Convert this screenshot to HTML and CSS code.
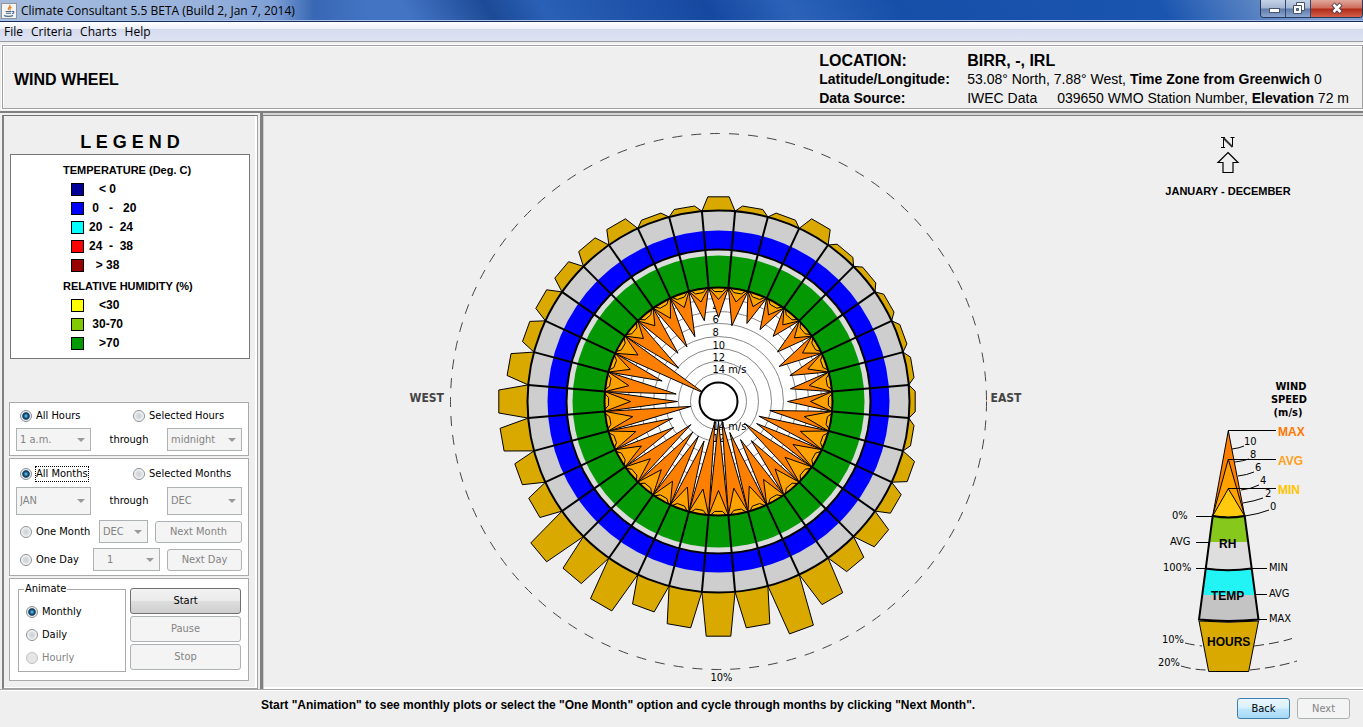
FILE: index.html
```html
<!DOCTYPE html>
<html lang="en">
<head>
<meta charset="utf-8">
<title>Climate Consultant 5.5 BETA</title>
<link rel="stylesheet" href="styles.css">
</head>
<body>
<div class="window">
  <header class="titlebar">
    <svg class="app-icon" viewBox="0 0 16 16" aria-hidden="true">
      <rect x="0.5" y="0.5" width="15" height="15" fill="#f4f4f2" stroke="#8d949c"/>
      <path d="M8.5 2c2 1.600-2.500 2.600-1 5M10.500 4c-2.500 1-1.500 2-1.200 3.300" fill="none" stroke="#e8791c" stroke-width="1.200"/>
      <path d="M4.500 8.500h6M5 10.300h5M3 12.500c2 1.200 7 1.200 9 0M11 8.500c2.500-.5 2.500 1.800 0 2.300" fill="none" stroke="#46698c" stroke-width="1.100"/>
    </svg>
    <span class="title">Climate Consultant 5.5 BETA (Build 2, Jan 7, 2014)</span>
    <div class="window-buttons">
      <button type="button" class="win" aria-label="Minimize"><svg viewBox="0 0 24 17"><rect x="8.500" y="8.500" width="10" height="4" fill="#fff" stroke="#47546b"/></svg></button>
      <button type="button" class="win" aria-label="Restore"><svg viewBox="0 0 24 17"><path d="M10.500 2.500h8v8h-8z" fill="#fff" stroke="#47546b"/><path d="M7.500 5.500h8v8h-8z" fill="#fff" stroke="#47546b"/><path d="M10.500 8.500h2v2h-2z" fill="#6d84ab" stroke="#47546b"/></svg></button>
      <button type="button" class="win win-close" aria-label="Close"><svg viewBox="0 0 24 17"><path d="M8 4l8 8.500M16 4l-8 8.500" stroke="#4b3a45" stroke-width="4.500"/><path d="M8.500 4.500l7 7.500M15.500 4.500l-7 7.500" stroke="#fff" stroke-width="2.600"/></svg></button>
    </div>
  </header>

  <nav class="menubar">
    <button type="button">File</button>
    <button type="button">Criteria</button>
    <button type="button">Charts</button>
    <button type="button">Help</button>
  </nav>

  <section class="heading">
    <h1>WIND WHEEL</h1>
    <dl class="station">
      <dt class="big">LOCATION:</dt><dd class="big">BIRR, -, IRL</dd>
      <dt>Latitude/Longitude:</dt><dd>53.08° North, 7.88° West, <b>Time Zone from Greenwich</b> 0</dd>
      <dt>Data Source:</dt><dd><span class="dataset">IWEC Data</span>039650 WMO Station Number, <b>Elevation</b> 72 m</dd>
    </dl>
  </section>

  <main class="workspace">
    <aside class="sidebar">
      <h2>L E G E N D</h2>
      <section class="legend">
        <h3>TEMPERATURE (Deg. C)</h3>
        <ul>
          <li><i class="swatch t-freezing"></i><span>   &lt; 0</span></li>
          <li><i class="swatch t-cold"></i><span> 0   -   20</span></li>
          <li><i class="swatch t-comfort"></i><span>20  -  24</span></li>
          <li><i class="swatch t-warm"></i><span>24  -  38</span></li>
          <li><i class="swatch t-hot"></i><span>  &gt; 38</span></li>
        </ul>
        <h3 class="second">RELATIVE HUMIDITY (%)</h3>
        <ul>
          <li><i class="swatch h-dry"></i><span>   &lt;30</span></li>
          <li><i class="swatch h-mid"></i><span> 30-70</span></li>
          <li><i class="swatch h-wet"></i><span>   &gt;70</span></li>
        </ul>
      </section>

      <form class="controls">
        <section class="group">
          <div class="row range">
            <label class="radio"><input type="radio" name="hours" checked><span>All Hours</span></label>
            <label class="radio"><input type="radio" name="hours"><span>Selected Hours</span></label>
          </div>
          <div class="row spread short">
            <span class="combo w75"><select disabled aria-label="First hour"><option>1 a.m.</option></select></span>
            <span>through</span>
            <span class="combo w75"><select disabled aria-label="Last hour"><option>midnight</option></select></span>
          </div>
        </section>
        <section class="group months">
          <div class="row range">
            <label class="radio focus"><input type="radio" name="months" checked><span>All Months</span></label>
            <label class="radio"><input type="radio" name="months"><span>Selected Months</span></label>
          </div>
          <div class="row spread tall">
            <span class="combo w75"><select disabled aria-label="First month"><option>JAN</option></select></span>
            <span>through</span>
            <span class="combo w75"><select disabled aria-label="Last month"><option>DEC</option></select></span>
          </div>
          <div class="row short">
            <label class="radio"><input type="radio" name="months"><span>One Month</span></label>
            <span class="combo w49 push"><select disabled aria-label="Month"><option>DEC</option></select></span>
            <button type="button" class="btn w87" disabled>Next Month</button>
          </div>
          <div class="row short">
            <label class="radio"><input type="radio" name="months"><span>One Day</span></label>
            <span class="combo w67 push indent"><select disabled aria-label="Day"><option>1</option></select></span>
            <button type="button" class="btn w75" disabled>Next Day</button>
          </div>
        </section>
        <section class="group animate">
          <fieldset>
            <legend>Animate</legend>
            <label class="radio"><input type="radio" name="step" checked><span>Monthly</span></label>
            <label class="radio"><input type="radio" name="step"><span>Daily</span></label>
            <label class="radio off"><input type="radio" name="step" disabled><span>Hourly</span></label>
          </fieldset>
          <div class="playback">
            <button type="button" class="btn">Start</button>
            <button type="button" class="btn" disabled>Pause</button>
            <button type="button" class="btn" disabled>Stop</button>
          </div>
        </section>
      </form>
    </aside>

    <section class="chart">
      <svg class="wheel" viewBox="0 0 624 568" role="img" aria-label="Wind wheel, January to December">
        <g id="wheel" transform="translate(313.500 284.500)"></g>
      </svg>
      <div class="side">
        <div class="north">
          <svg class="compass" viewBox="0 0 24 38" aria-label="North">
            <path d="M7.500 2v9M16.500 2v9M5 1.500h4M14.500 1.500h4M5 11.500h4" fill="none" stroke="#000"/>
            <path d="M7.500 2l9 9" fill="none" stroke="#333" stroke-width="2"/>
            <path d="M12 16.500L22 26.500h-5v10h-10v-10h-5z" fill="none" stroke="#000" stroke-width="1.200"/>
          </svg>
          <div class="period">JANUARY - DECEMBER</div>
        </div>
        <svg class="key" viewBox="-2 0 180 310" role="img" aria-label="How to read a sector">
          <g class="key-title"><text x="151" y="20">WIND</text><text x="149" y="33">SPEED</text><text x="148" y="46">(m/s)</text></g>
          <path d="M88.300 60.700L72.700 146Q88 149 104.700 146z" fill="#ff7f00" stroke="#000"/>
          <path d="M88.300 89.300L72.700 146Q88 149 104.700 146z" fill="#ffa200" stroke="#000"/>
          <path d="M88.300 118.700L72.700 146Q88 149 104.700 146z" fill="#ffc90e" stroke="#000"/>
          <path d="M72.700 146Q88 149 104.700 146L111.700 198.500Q88 202 65 198.500z" fill="#dedede"/>
          <path d="M72.700 146Q88 149 104.700 146L108 172H69z" fill="#86c81c"/>
          <path d="M65 198.500Q88 202 111.700 198.500L118.500 249.500Q88 252.500 59 249.500z" fill="#c4c4c4"/>
          <path d="M65 198.500Q88 202 111.700 198.500L115.300 225H62z" fill="#22f4f6"/>
          <path d="M72.700 146Q88 149 104.700 146L118.500 249.500Q88 252.500 59 249.500zM65 198.500Q88 202 111.700 198.500" fill="none" stroke="#000" stroke-width="2"/>
          <path d="M59 251Q88 253.500 118.500 251L108.700 301.500h-40z" fill="#d9a900" stroke="#000"/>
          <g fill="none" stroke="#000">
            <path d="M88 60.500h48M88 89.500h48M88 118.500h48M56 146.500h16M56 172.500h13M56 198.500h9M112 198.500h15M115 224.500h12M118 249.500h9"/>
            <path d="M92 79q8-1 12-3M95 92q8-1 14-3M98 106q9-1 16-4M101 120q10-1 18-5M103 133q12-2 20-5M105 146q14-2 24-6"/>
            <path d="M45 273q8 2 17 3M114 276q24-3 38-7.500M41 296q13 4 27 4M110 300q28-3 47-9" stroke-dasharray="10 5" stroke="#333"/>
          </g>
          <g class="key-small">
            <text x="104" y="75">10</text><text x="110" y="88">8</text><text x="115" y="101">6</text><text x="120" y="114">4</text><text x="125" y="127">2</text><text x="130" y="140">0</text>
            <text x="32" y="149">0%</text><text x="30" y="175">AVG</text><text x="23" y="201">100%</text>
            <text x="129" y="201">MIN</text><text x="129" y="227">AVG</text><text x="129" y="252">MAX</text>
            <text x="22" y="273">10%</text><text x="18" y="296">20%</text>
          </g>
          <g class="key-bold">
            <text x="138" y="66" fill="#ff7800">MAX</text><text x="138" y="95" fill="#ff9f20">AVG</text><text x="138" y="124" fill="#ffc400">MIN</text>
            <text x="79" y="178">RH</text><text x="71" y="230">TEMP</text><text x="67" y="276">HOURS</text>
          </g>
        </svg>
      </div>
    </section>
  </main>

  <footer class="footer">
    <p>Start "Animation" to see monthly plots or select the "One Month" option and cycle through months by clicking "Next Month".</p>
    <button type="button" class="btn nav back">Back</button>
    <button type="button" class="btn nav" disabled>Next</button>
  </footer>
</div>
<script src="wheel.js"></script>
</body>
</html>
```
FILE: styles.css
```css
* { box-sizing: border-box; }
body {
  margin: 0;
  background: #efefef;
  color: #000;
  font: 11px/14px "DejaVu Sans Condensed", "Noto Sans", sans-serif;
}
button, select, input { font: inherit; color: inherit; }
h1, h2, h3, p, ul, dl, dd { margin: 0; padding: 0; }
.window { display: flex; flex-direction: column; min-height: 100vh; }

.titlebar {
  display: flex;
  align-items: center;
  height: 22px;
  padding-left: 1px;
  gap: 4px;
  border-bottom: 1px solid #182c58;
  box-shadow: inset 0 -1px #a8c0ea;
  background:
    linear-gradient(90deg, #a4bbdc 0, #98b2dc 15%, #7fa0d6 20%, #3868b4 23%, transparent 27%),
    linear-gradient(60deg, #4374c4 30%, #1c4a96 36%, #2a60b6 40%, #1648a0 52%, #2c63b9 58%, #164fa8 66%, #1a55b0 85%, #7f9fce 96%);
}
.app-icon { width: 16px; height: 16px; }
.title { font: 12px/18px "Open Sans", "Noto Sans", sans-serif; }
.window-buttons { display: flex; align-self: flex-start; margin-left: auto; border: 1px solid #26385e; border-top: 0; border-radius: 0 0 4px 4px; overflow: hidden; }
.win { width: 25px; height: 17px; padding: 0; border: 0; border-right: 1px solid #33466c; background: linear-gradient(#c5d2e6, #a3b6d3 48%, #5e7aa8 52%, #8ba6cf); }
.win svg { display: block; width: 24px; height: 17px; margin: 0 auto; }
.win-close { width: 51px; border-right: 0; background: linear-gradient(#dfa89c, #cf6b5a 48%, #b02a18 52%, #d2604a); }

.menubar { display: flex; gap: 8px; height: 20px; padding-left: 4px; border-bottom: 1px solid #9a9a9a; background: linear-gradient(#fff 0, #eef1f8 34%, #d5dbed 38%, #dfe4f4); }
.menubar button { padding: 0; border: 0; background: none; font: 12px/18px "Open Sans", "Noto Sans", sans-serif; }

.heading {
  display: flex;
  align-items: center;
  justify-content: space-between;
  min-height: 64px;
  margin: 3px 0 2px 2px;
  padding: 0 13px 0 11px;
  border: 1px solid #a0a0a0;
  outline: 1px solid #fff;
  box-shadow: inset 1px 1px #fff;
  font-family: "Liberation Sans", Arial, sans-serif;
}
.heading h1 { font-size: 16px; line-height: 20px; margin-top: 6px; }
.station { display: grid; grid-template-columns: 148px auto; font-size: 14px; line-height: 19px; margin-top: 4px; white-space: nowrap; }
.station dt { font-weight: bold; }
.station .big { font-size: 16px; font-weight: bold; }
.dataset { margin-right: 20px; }

.workspace { flex: 1; display: flex; border-top: 2px solid #808080; }
.sidebar {
  flex: 0 0 256px;
  margin: 2px 0 0 2px;
  padding: 17px 7px 7px 6px;
  border: 1px solid #a0a0a0;
  border-left: 2px solid #808080;
  border-top-color: #707070;
  box-shadow: inset -2px -1px #fff;
}
.sidebar h2 { font: bold 18px/18px "Liberation Sans", Arial, sans-serif; text-align: center; }
.legend {
  margin: 3px 0 0;
  padding: 6px 0 5px 52px;
  border: 1px solid #777;
  background: #fff;
  font: bold 11px/19px "Liberation Sans", Arial, sans-serif;
}
.legend h3 { font-size: 11px; line-height: 19px; }
.legend .second { margin-top: 2px; }
.legend ul { list-style: none; padding-left: 8px; }
.legend li { display: flex; align-items: center; gap: 5px; font-size: 12px; height: 19px; white-space: pre; }
.swatch { width: 13px; height: 13px; border: 1px solid #000; }
.t-freezing { background: #000099; }
.t-cold { background: #0000ff; }
.t-comfort { background: #00ffff; }
.t-warm { background: #ff0000; }
.t-hot { background: #990000; }
.h-dry { background: #ffff00; }
.h-mid { background: #80c800; }
.h-wet { background: #009900; }

.controls { display: flex; flex-direction: column; gap: 2px; margin: 43px 1px 0 -1px; }
.group { padding: 5px 6px 4px; border: 1px solid #aaa; background: #fff; }
.row { display: flex; align-items: center; gap: 7px; }
.range { display: grid; grid-template-columns: 113px 1fr; gap: 0; height: 16px; padding-left: 4px; }
.spread { justify-content: space-between; }
.short { height: 23px; margin-top: 4px; }
.tall { height: 28px; margin: 5px 0; }
.months { padding: 7px 6px 4px; }
.months .short { margin-top: 5px; padding-left: 4px; }
.radio { display: flex; align-items: center; gap: 4px; white-space: nowrap; }
.radio input {
  appearance: none;
  flex: none;
  width: 12px;
  height: 12px;
  margin: 0;
  border: 1px solid #8a8f94;
  border-radius: 50%;
  background: radial-gradient(circle, #c9ced2 0, #dfe2e4 45%, #fff 75%);
}
.radio input:checked { background: radial-gradient(circle at 50% 50%, #7fd0f0 0, #1b6f9f 25%, #0c2c4c 46%, #e8eef2 60%); }
.radio input:disabled { border-color: #c0c0c0; background: #e6e6e6; }
.focus span { outline: 1px dotted #000; }
.off { color: #838383; }
.combo { position: relative; display: block; height: 100%; }
.combo::after { content: ""; position: absolute; right: 6px; top: calc(50% - 2px); border: 4px solid transparent; border-top-color: #999; border-bottom: 0; }
.combo select { appearance: none; width: 100%; height: 100%; padding: 0 3px; border: 1px solid #adb2b5; border-radius: 0; background: #f4f4f4; color: #838383; opacity: 1; }
.w75 { width: 75px; }
.w49 { width: 49px; }
.w67 { width: 67px; }
.w87 { width: 87px; }
.push { margin-left: auto; }
.indent select { padding-left: 13px; }
.btn { height: 22px; padding: 0; border: 1px solid #707070; border-radius: 3px; background: linear-gradient(#f2f2f2, #ebebeb 48%, #dddddd 52%, #cfcfcf); }
.btn:disabled { border-color: #adb2b5; background: #f4f4f4; color: #838383; }
.animate { display: flex; gap: 4px; padding: 4px 7px 8px 8px; }
.animate fieldset { flex: 1; display: flex; flex-direction: column; gap: 9px; margin: 0; padding: 10px 7px 6px; border: 1px solid #aaa; }
.animate legend { margin-left: -2px; padding: 0 1px; line-height: 12px; }
.playback { display: flex; flex-direction: column; gap: 2px; width: 111px; padding-top: 5px; }
.playback .btn { height: 26px; }

.chart {
  flex: 1;
  min-width: 0;
  display: flex;
  margin-left: 2px;
  padding-left: 142px;
  border: 0 solid #808080;
  border-left: 3px solid #808080;
  box-shadow: inset 0 2px #d4d4d4, inset 0 3px #808080, inset 1px 0 #ccc, inset 0 -2px #fff;
}
.wheel { flex: 0 1 624px; min-width: 0; align-self: flex-start; margin-top: 4px; }
.wheel text { font-size: 11px; }
.wheel .cardinal { font: bold 12px "DejaVu Sans Condensed", sans-serif; fill: #444; }
.side { flex: none; width: 200px; margin: 0 35px 9px auto; display: flex; flex-direction: column; justify-content: space-between; align-items: center; }
.north { display: flex; flex-direction: column; align-items: center; padding-top: 23px; gap: 10px; }
.compass { width: 24px; height: 38px; }
.period { font: bold 11px/14px "Liberation Sans", Arial, sans-serif; }
.key { width: 180px; height: 310px; }
.key-title { font: bold 11px "DejaVu Sans Condensed", sans-serif; text-anchor: middle; }
.key-small { font-size: 11px; }
.key-bold { font: bold 12px "Liberation Sans", Arial, sans-serif; }

.footer { display: flex; align-items: flex-start; gap: 7px; height: 38px; padding: 8px 13px 0 261px; border-top: 1px solid #a8a8a8; box-shadow: inset 0 1px #fff; }
.footer p { flex: 1; font: bold 12px/14px "Liberation Sans", Arial, sans-serif; white-space: nowrap; }
.nav { width: 53px; height: 21px; }
.back { border-color: #3c7fb1; background: linear-gradient(#eaf6fd, #d9f0fc 48%, #bee6fd 52%, #a7d9f5); }
```
FILE: wheel.js
```js
// One entry per 10 degree sector, clockwise from north; all values are radii.
const hours = [205, 197, 197, 205, 197, 197, 197, 197, 197, 197, 197, 205, 205, 213, 213, 228, 243, 228,
  235, 228, 220, 235, 228, 235, 213, 213, 220, 220, 213, 205, 205, 205, 205, 205, 197, 197];
const maxWind = [84, 77, 83, 83, 85, 77, 70, 76, 73, 69, 52, 43, 44, 34, 51, 44, 33, 20,
  20, 20, 42, 40, 40, 36, 52, 49, 28, 41, 43, 60, 16, 52, 63, 63, 69, 82];
const avgWind = [102, 101, 101, 100, 100, 99, 97, 95, 92, 92, 87, 87, 86, 87, 88, 90, 90, 88,
  89, 89, 91, 92, 89, 89, 89, 88, 87, 88, 91, 94, 93, 98, 99, 96, 100, 101];

const OUTER = 191, MIDDLE = 152, INNER = 114, HUB = 19;
const root = document.getElementById('wheel');

function add(tag, attrs, text) {
  const el = document.createElementNS('http://www.w3.org/2000/svg', tag);
  for (const name in attrs) el.setAttribute(name, attrs[name]);
  if (text) el.textContent = text;
  root.appendChild(el);
}
function pt(r, deg) {
  const a = deg * Math.PI / 180;
  return (r * Math.sin(a)).toFixed(1) + ' ' + (-r * Math.cos(a)).toFixed(1);
}
function circle(r, fill, stroke, width, dash) {
  add('circle', { r, fill, stroke: stroke || 'none', 'stroke-width': width || 1, 'stroke-dasharray': dash || 'none' });
}

circle(268, 'none', '#444', 1, '10 9');
hours.forEach((r, i) => {
  const a = i * 10;
  add('path', { d: `M${pt(OUTER, a - 5)}L${pt(r, a - 3)}L${pt(r, a + 3)}L${pt(OUTER, a + 5)}z`, fill: '#d9a900', stroke: '#000' });
});

circle(OUTER, '#cecece');
circle(171, '#0000ff');
circle(MIDDLE, '#dcdcdc');
circle(146, '#059805');
circle(INNER, '#fff');
[28, 40, 53, 65, 78, 90, 103].forEach(r => circle(r, 'none', '#888'));

[['4', -91], ['6', -79], ['8', -66], ['10', -53], ['12', -41], ['14 m/s', -29], ['14 m/s', 28], ['12', 40]]
  .forEach(([label, y]) => add('text', { x: -6, y }, label));

function spikes(radii, fill) {
  radii.forEach((r, i) => {
    const a = i * 10;
    add('path', { d: `M${pt(INNER, a - 5)}L${pt(r, a)}L${pt(INNER, a + 5)}A${INNER} ${INNER} 0 0 0 ${pt(INNER, a - 5)}z`, fill, stroke: '#000' });
  });
}
spikes(maxWind, '#ff7f00');
spikes(avgWind, '#ffa200');
for (let a = 0; a < 360; a += 10) {
  add('path', { d: `M${pt(INNER, a - 4)}L${pt(110, a - 2)}L${pt(110, a + 2)}L${pt(INNER, a + 4)}`, fill: '#ffb400', stroke: '#000' });
  add('path', { d: `M${pt(INNER, a + 5)}L${pt(OUTER, a + 5)}`, stroke: '#000', 'stroke-width': 2 });
}
[OUTER, MIDDLE, INNER].forEach(r => circle(r, 'none', '#000', 2));
circle(HUB, '#fff', '#000', 2);

add('text', { x: -309, y: 0, class: 'cardinal' }, 'WEST');
add('text', { x: 272, y: 0, class: 'cardinal' }, 'EAST');
add('text', { x: -8, y: 279 }, '10%');
```
